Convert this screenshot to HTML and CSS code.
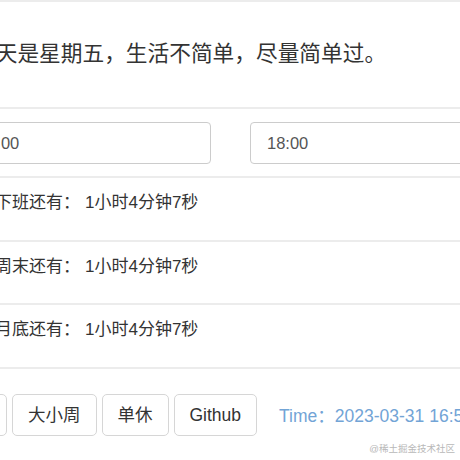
FILE: index.html
```html
<!DOCTYPE html>
<html lang="zh-CN">
<head>
<meta charset="utf-8">
<title>摸鱼办</title>
<link rel="stylesheet" href="styles.css">
</head>
<body>
<div class="page">
  <div class="card">
    <div class="section heading-section">
      <h1 class="heading">今天是星期五，生活不简单，尽量简单过。</h1>
    </div>
    <div class="section time-inputs">
      <input class="time-input" type="text" value="09:00">
      <input class="time-input" type="text" value="18:00">
    </div>
    <div class="section row"><p class="row-text"><span class="label">距下班还有：</span><span class="value">1小时4分钟7秒</span></p></div>
    <div class="section row"><p class="row-text"><span class="label">距周末还有：</span><span class="value">1小时4分钟7秒</span></p></div>
    <div class="section row"><p class="row-text"><span class="label">距月底还有：</span><span class="value">1小时4分钟7秒</span></p></div>
    <div class="section toolbar">
      <button class="btn" type="button">双休</button>
      <button class="btn" type="button">大小周</button>
      <button class="btn" type="button">单休</button>
      <button class="btn" type="button">Github</button>
      <span class="clock">Time：2023-03-31 16:55:53</span>
    </div>
  </div>
  <div class="watermark">@稀土掘金技术社区</div>
</div>
</body>
</html>
```

FILE: styles.css
```css
html, body {
  margin: 0;
  padding: 0;
  background: #fff;
  overflow: hidden;
}

body {
  font-family: "Liberation Sans", "Noto Sans CJK SC", sans-serif;
  color: #333;
  width: 460px;
  height: 460px;
}

.page {
  position: relative;
  width: 460px;
  height: 460px;
  overflow: hidden;
}

.card {
  width: 640px;
  margin-left: -39px;
  border-top: 2px solid #ececec;
}

.section {
  border-bottom: 2px solid #ececec;
}

.heading-section {
  padding: 35px 0 37px 13px;
}

.heading {
  margin: 0;
  font-size: 21.7px;
  line-height: 33px;
  font-weight: normal;
  color: #333;
  white-space: nowrap;
}

.time-inputs {
  display: grid;
  grid-template-columns: 250px 250px;
  column-gap: 39px;
  padding: 13px 0 12px 0;
}

.time-input {
  box-sizing: border-box;
  height: 42px;
  border: 1px solid #cccccc;
  border-radius: 4px;
  padding: 0 16px;
  font-family: "Liberation Sans", "Noto Sans CJK SC", sans-serif;
  font-size: 16.5px;
  color: #555;
  background: #fff;
  outline: none;
}

.row {
  padding: 12px 0 24px 17px;
}

.row-text {
  margin: 0;
  font-size: 17px;
  line-height: 25.5px;
  color: #333;
  white-space: nowrap;
}

.value {
  margin-left: 5px;
}

.toolbar {
  border-bottom: none;
  display: flex;
  align-items: center;
  gap: 5px;
  padding-top: 25px;
  margin-left: -21px;
}

.btn {
  box-sizing: border-box;
  height: 42px;
  padding: 0 15px;
  border: 1px solid #d6d6d6;
  border-radius: 5px;
  background: #fff;
  font-family: "Liberation Sans", "Noto Sans CJK SC", sans-serif;
  font-size: 17.5px;
  line-height: 20px;
  color: #333;
  white-space: nowrap;
}

.clock {
  margin-left: 17px;
  font-size: 17.5px;
  color: #72a4d6;
  white-space: nowrap;
}

.watermark {
  position: absolute;
  right: 5px;
  bottom: 5px;
  font-size: 9.5px;
  color: #b8b8b8;
  white-space: nowrap;
  text-shadow: 0 0 1px #fff;
}
```
